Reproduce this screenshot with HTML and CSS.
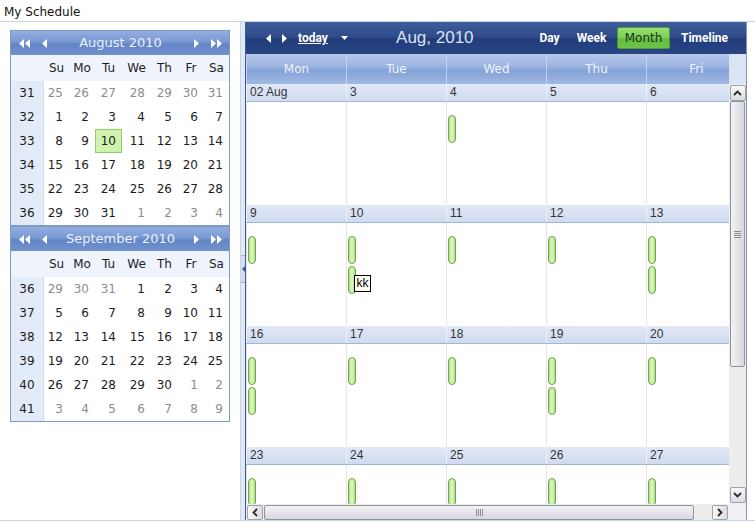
FILE: index.html
```html
<!DOCTYPE html>
<html>
<head>
<meta charset="utf-8">
<title>My Schedule</title>
<link rel="stylesheet" href="styles.css">
</head>
<body>
<div class="title">My Schedule</div>
<div class="frame">
  <div class="left">
    <div class="cal">
      <div class="cal-head">
        <span class="nav"><svg width="13" height="9" viewBox="0 0 13 9"><path d="M6 0v9L1 4.5zM12 0v9L7 4.5z" fill="#fff"/></svg></span>
        <span class="nav nav-s"><svg width="5" height="9" viewBox="0 0 5 9"><path d="M5 0v9L0 4.5z" fill="#fff"/></svg></span>
        <span class="cal-title">August 2010</span>
        <span class="nav nav-s"><svg width="5" height="9" viewBox="0 0 5 9"><path d="M0 0v9L5 4.5z" fill="#fff"/></svg></span>
        <span class="nav"><svg width="13" height="9" viewBox="0 0 13 9"><path d="M1 0v9L6 4.5zM7 0v9L12 4.5z" fill="#fff"/></svg></span>
      </div>
      <div class="cal-grid">
        <div class="wk hd"></div><div class="dn">Su</div><div class="dn">Mo</div><div class="dn">Tu</div><div class="dn">We</div><div class="dn">Th</div><div class="dn">Fr</div><div class="dn">Sa</div>
        <div class="wk">31</div><div class="d om">25</div><div class="d om">26</div><div class="d om">27</div><div class="d om">28</div><div class="d om">29</div><div class="d om">30</div><div class="d om">31</div>
        <div class="wk">32</div><div class="d">1</div><div class="d">2</div><div class="d">3</div><div class="d">4</div><div class="d">5</div><div class="d">6</div><div class="d">7</div>
        <div class="wk">33</div><div class="d">8</div><div class="d">9</div><div class="d sel">10</div><div class="d">11</div><div class="d">12</div><div class="d">13</div><div class="d">14</div>
        <div class="wk">34</div><div class="d">15</div><div class="d">16</div><div class="d">17</div><div class="d">18</div><div class="d">19</div><div class="d">20</div><div class="d">21</div>
        <div class="wk">35</div><div class="d">22</div><div class="d">23</div><div class="d">24</div><div class="d">25</div><div class="d">26</div><div class="d">27</div><div class="d">28</div>
        <div class="wk">36</div><div class="d">29</div><div class="d">30</div><div class="d">31</div><div class="d om">1</div><div class="d om">2</div><div class="d om">3</div><div class="d om">4</div>
      </div>
    </div>
    <div class="cal">
      <div class="cal-head">
        <span class="nav"><svg width="13" height="9" viewBox="0 0 13 9"><path d="M6 0v9L1 4.5zM12 0v9L7 4.5z" fill="#fff"/></svg></span>
        <span class="nav nav-s"><svg width="5" height="9" viewBox="0 0 5 9"><path d="M5 0v9L0 4.5z" fill="#fff"/></svg></span>
        <span class="cal-title">September 2010</span>
        <span class="nav nav-s"><svg width="5" height="9" viewBox="0 0 5 9"><path d="M0 0v9L5 4.5z" fill="#fff"/></svg></span>
        <span class="nav"><svg width="13" height="9" viewBox="0 0 13 9"><path d="M1 0v9L6 4.5zM7 0v9L12 4.5z" fill="#fff"/></svg></span>
      </div>
      <div class="cal-grid">
        <div class="wk hd"></div><div class="dn">Su</div><div class="dn">Mo</div><div class="dn">Tu</div><div class="dn">We</div><div class="dn">Th</div><div class="dn">Fr</div><div class="dn">Sa</div>
        <div class="wk">36</div><div class="d om">29</div><div class="d om">30</div><div class="d om">31</div><div class="d">1</div><div class="d">2</div><div class="d">3</div><div class="d">4</div>
        <div class="wk">37</div><div class="d">5</div><div class="d">6</div><div class="d">7</div><div class="d">8</div><div class="d">9</div><div class="d">10</div><div class="d">11</div>
        <div class="wk">38</div><div class="d">12</div><div class="d">13</div><div class="d">14</div><div class="d">15</div><div class="d">16</div><div class="d">17</div><div class="d">18</div>
        <div class="wk">39</div><div class="d">19</div><div class="d">20</div><div class="d">21</div><div class="d">22</div><div class="d">23</div><div class="d">24</div><div class="d">25</div>
        <div class="wk">40</div><div class="d">26</div><div class="d">27</div><div class="d">28</div><div class="d">29</div><div class="d">30</div><div class="d om">1</div><div class="d om">2</div>
        <div class="wk">41</div><div class="d om">3</div><div class="d om">4</div><div class="d om">5</div><div class="d om">6</div><div class="d om">7</div><div class="d om">8</div><div class="d om">9</div>
      </div>
    </div>
  </div>

  <div class="splitter">
    <div class="handle"><svg width="3" height="6" viewBox="0 0 3 6"><path d="M3 0v6L0 3z" fill="#3d5c9a"/></svg></div>
  </div>

  <div class="sched">
    <div class="toolbar">
      <span class="tb-arrow"><svg width="5" height="9" viewBox="0 0 5 9"><path d="M5 0v9L0 4.5z" fill="#fff"/></svg></span>
      <span class="tb-arrow tb-next"><svg width="5" height="9" viewBox="0 0 5 9"><path d="M0 0v9L5 4.5z" fill="#fff"/></svg></span>
      <span class="today">today</span>
      <span class="dd"><svg width="7" height="4" viewBox="0 0 7 4"><path d="M0 0h7L3.5 4z" fill="#fff"/></svg></span>
      <span class="period">Aug, 2010</span>
      <div class="views">
        <span class="view v-day">Day</span>
        <span class="view v-week">Week</span>
        <span class="view v-month">Month</span>
        <span class="view v-tl">Timeline</span>
      </div>
    </div>

    <div class="colhead">
      <div class="colhead-cells">
        <div>Mon</div><div>Tue</div><div>Wed</div><div>Thu</div><div>Fri</div>
      </div>
      <div class="colhead-fill"></div>
    </div>

    <div class="main">
      <div class="viewport">
        <div class="week">
          <div class="daterow"><div>02 Aug</div><div>3</div><div>4</div><div>5</div><div>6</div></div>
          <div class="wbody">
            <div class="d"></div>
            <div class="d"></div>
            <div class="d"><span class="apt"></span></div>
            <div class="d"></div>
            <div class="d"></div>
          </div>
        </div>
        <div class="week">
          <div class="daterow"><div>9</div><div>10</div><div>11</div><div>12</div><div>13</div></div>
          <div class="wbody">
            <div class="d"><span class="apt"></span></div>
            <div class="d"><span class="apt"></span><span class="apt"></span><span class="tip">kk</span></div>
            <div class="d"><span class="apt"></span></div>
            <div class="d"><span class="apt"></span></div>
            <div class="d"><span class="apt"></span><span class="apt"></span></div>
          </div>
        </div>
        <div class="week">
          <div class="daterow"><div>16</div><div>17</div><div>18</div><div>19</div><div>20</div></div>
          <div class="wbody">
            <div class="d"><span class="apt"></span><span class="apt"></span></div>
            <div class="d"><span class="apt"></span></div>
            <div class="d"><span class="apt"></span></div>
            <div class="d"><span class="apt"></span><span class="apt"></span></div>
            <div class="d"><span class="apt"></span></div>
          </div>
        </div>
        <div class="week">
          <div class="daterow"><div>23</div><div>24</div><div>25</div><div>26</div><div>27</div></div>
          <div class="wbody">
            <div class="d"><span class="apt"></span></div>
            <div class="d"><span class="apt"></span></div>
            <div class="d"><span class="apt"></span></div>
            <div class="d"><span class="apt"></span></div>
            <div class="d"><span class="apt"></span></div>
          </div>
        </div>
      </div>
      <div class="vscroll">
        <div class="sbtn"><svg width="9" height="6" viewBox="0 0 9 6"><path d="M1 5L4.5 1.5 8 5" fill="none" stroke="#2a2a2a" stroke-width="1.8"/></svg></div>
        <div class="vthumb"><svg width="7" height="7" viewBox="0 0 7 7"><path d="M0 .5h7M0 2.5h7M0 4.5h7M0 6.5h7" stroke="#8a8c92" stroke-width="1"/></svg></div>
        <div class="track"></div>
        <div class="sbtn"><svg width="9" height="6" viewBox="0 0 9 6"><path d="M1 1L4.5 4.5 8 1" fill="none" stroke="#2a2a2a" stroke-width="1.8"/></svg></div>
      </div>
    </div>

    <div class="hbar">
      <div class="hscroll">
        <div class="sbtn"><svg width="6" height="9" viewBox="0 0 6 9"><path d="M5 1L1.5 4.5 5 8" fill="none" stroke="#2a2a2a" stroke-width="1.8"/></svg></div>
        <div class="hthumb"><svg width="7" height="7" viewBox="0 0 7 7"><path d="M.5 0v7M2.5 0v7M4.5 0v7M6.5 0v7" stroke="#8a8c92" stroke-width="1"/></svg></div>
        <div class="track"></div>
        <div class="sbtn"><svg width="6" height="9" viewBox="0 0 6 9"><path d="M1 1L4.5 4.5 1 8" fill="none" stroke="#2a2a2a" stroke-width="1.8"/></svg></div>
      </div>
      <div class="corner"></div>
    </div>
  </div>
</div>
</body>
</html>
```

FILE: styles.css
```css
html, body {
  margin: 0;
  padding: 0;
  background: #fff;
}
body {
  width: 755px;
  font-family: "DejaVu Sans", sans-serif;
  font-size: 12px;
  color: #1c1c1c;
}
.title {
  height: 21px;
  box-sizing: border-box;
  padding: 4px 0 0 4px;
  line-height: 16px;
  font-size: 12px;
  color: #111;
}
.frame {
  display: flex;
  height: 498px;
  border-top: 1px solid #c8d4e7;
  border-bottom: 1px solid #c8d4e7;
}

/* ---------- left pane / calendars ---------- */
.left {
  width: 241px;
  box-sizing: border-box;
  border-right: 1px solid #c8d4e7;
  padding: 8px 0 0 10px;
}
.cal {
  width: 220px;
  box-sizing: border-box;
  border: 1px solid #7f9ac5;
}
.cal-head {
  height: 24px;
  display: flex;
  align-items: center;
  padding: 0 6px 0 7px;
  background: linear-gradient(#93aee0 0%, #7898d3 45%, #6385c5 55%, #7192ce 100%);
  color: #e9f0fb;
  font-size: 13px;
}
.nav {
  display: flex;
  align-items: center;
}
.nav-s {
  margin: 0 11px;
}
.cal-title {
  flex: 1;
  text-align: center;
  line-height: 24px;
}
.cal-grid {
  display: grid;
  grid-template-columns: 33px 25px 26px 27px 29px 27px 26px 25px;
  grid-template-rows: 26px repeat(6, 24px);
}
.dn {
  background: #eff4fc;
  text-align: center;
  line-height: 26px;
  color: #1c1c1c;
}
.wk {
  box-sizing: border-box;
  background: #e3ebf8;
  border-right: 1px solid #d2ddef;
  text-align: center;
  line-height: 24px;
}
.wk.hd {
  background: #eff4fc;
  border-right: none;
}
.d {
  box-sizing: border-box;
  text-align: right;
  padding-right: 6px;
  line-height: 24px;
}
.om {
  color: #8d8d8d;
}
.sel {
  background: #cff2ae;
  border: 1px solid #96cb6a;
  line-height: 22px;
  padding-right: 5px;
}

/* ---------- splitter ---------- */
.splitter {
  width: 4px;
  background: #e2e9f5;
  position: relative;
}
.handle {
  position: absolute;
  left: 0;
  top: 233px;
  width: 4px;
  height: 28px;
  box-sizing: border-box;
  background: #d3def0;
  border-top: 1px solid #9fb2d4;
  border-bottom: 1px solid #9fb2d4;
  display: flex;
  align-items: center;
  justify-content: center;
}

/* ---------- scheduler ---------- */
.sched {
  width: 502px;
  box-sizing: border-box;
  border-left: 1px solid #3f5b94;
  border-right: 1px solid #8494b0;
  display: flex;
  flex-direction: column;
}
.toolbar {
  height: 32px;
  flex: 0 0 32px;
  display: flex;
  align-items: center;
  padding-left: 20px;
  background: linear-gradient(#405d9b 0%, #2e4a89 48%, #213c79 52%, #294584 100%);
  color: #fff;
}
.tb-arrow {
  display: flex;
  align-items: center;
}
.tb-next {
  margin-left: 11px;
}
.today {
  margin-left: 11px;
  font-family: Roboto, "Liberation Sans", sans-serif;
  font-weight: bold;
  font-size: 12px;
  text-decoration: underline;
  color: #fff;
}
.dd {
  display: flex;
  align-items: center;
  margin-left: 13px;
}
.period {
  width: 150px;
  margin-left: 12px;
  text-align: center;
  font-family: "Liberation Sans", sans-serif;
  font-size: 17px;
  color: #d9e3f5;
}
.views {
  margin-left: auto;
  display: flex;
  align-items: center;
  padding-right: 9px;
}
.view {
  text-align: center;
  font-family: Roboto, "Liberation Sans", sans-serif;
  font-weight: bold;
  font-size: 12px;
  color: #fff;
}
.v-day { width: 37px; }
.v-week { width: 47px; }
.v-month {
  width: 53px;
  height: 22px;
  margin: 0 2px;
  box-sizing: border-box;
  line-height: 20px;
  border: 1px solid #4f9a33;
  border-radius: 2px;
  background: linear-gradient(#96e06f 0%, #7acd55 50%, #62ba3e 55%, #6fc549 100%);
  font-family: "DejaVu Sans", sans-serif;
  font-weight: normal;
  color: #1b331b;
}
.v-tl { width: 65px; }

.colhead {
  height: 30px;
  flex: 0 0 30px;
  display: flex;
}
.colhead-cells {
  width: 483px;
  display: flex;
  overflow: hidden;
  background: linear-gradient(#b5c8ea 0%, #9db5e1 40%, #86a2d7 55%, #a0b8e3 100%);
}
.colhead-cells div {
  flex: 0 0 100px;
  box-sizing: border-box;
  border-left: 1px solid #c3d2ec;
  text-align: center;
  line-height: 30px;
  color: #eef3fb;
}
.colhead-fill {
  flex: 1;
  background: #dbe4f2;
}

.main {
  height: 420px;
  flex: 0 0 420px;
  display: flex;
}
.viewport {
  width: 483px;
  overflow: hidden;
  background: #fff;
}
.daterow {
  display: flex;
  height: 17px;
  border-bottom: 1px solid #a2b5d8;
  background: linear-gradient(#e1e8f6, #cfdbf0);
}
.daterow div {
  flex: 0 0 100px;
  box-sizing: border-box;
  border-left: 1px solid #edf1f9;
  padding-left: 3px;
  line-height: 17px;
  font-family: "Liberation Sans", sans-serif;
  font-size: 12px;
  color: #333;
}
.wbody {
  display: flex;
  height: 103px;
}
.wbody .d {
  flex: 0 0 100px;
  box-sizing: border-box;
  border-left: 1px solid #e6e6e6;
  position: relative;
  padding: 13px 0 0 1px;
  display: flex;
  flex-direction: column;
  gap: 2px;
}
.apt {
  display: block;
  width: 8px;
  height: 28px;
  flex: 0 0 28px;
  box-sizing: border-box;
  border: 1px solid #6fa645;
  border-radius: 4px;
  background: linear-gradient(90deg, #b4e189 0%, #e0f6c9 50%, #aedb80 100%);
}
.tip {
  position: absolute;
  left: 7px;
  top: 52px;
  width: 17px;
  height: 17px;
  box-sizing: border-box;
  border: 1px solid #000;
  background: #fffff4;
  font-family: "Liberation Sans", sans-serif;
  font-size: 12px;
  line-height: 15px;
  text-align: center;
  color: #000;
}

.vscroll {
  width: 17px;
  box-sizing: border-box;
  padding: 1px 0;
  background: #ededed;
  display: flex;
  flex-direction: column;
  align-items: center;
}
.sbtn {
  width: 16px;
  height: 16px;
  flex: 0 0 16px;
  box-sizing: border-box;
  border: 1px solid #9ca3ad;
  border-radius: 2px;
  background: linear-gradient(#f8f8f8, #dcdde2);
  display: flex;
  align-items: center;
  justify-content: center;
}
.vthumb {
  width: 15px;
  height: 266px;
  flex: 0 0 266px;
  box-sizing: border-box;
  border: 1px solid #8f939c;
  border-radius: 2px;
  background: linear-gradient(90deg, #f4f4f7, #d6d7df);
  display: flex;
  align-items: center;
  justify-content: center;
}
.track {
  flex: 1;
}
.hbar {
  height: 16px;
  flex: 0 0 16px;
  display: flex;
}
.hscroll {
  width: 483px;
  box-sizing: border-box;
  padding: 1px 1px 0 1px;
  background: #ededed;
  display: flex;
}
.hscroll .sbtn {
  height: 15px;
  flex: 0 0 16px;
  background: linear-gradient(90deg, #f8f8f8, #dcdde2);
}
.hthumb {
  width: 430px;
  flex: 0 0 430px;
  margin-left: 1px;
  box-sizing: border-box;
  border: 1px solid #8f939c;
  border-radius: 2px;
  background: linear-gradient(#f4f4f7, #d6d7df);
  display: flex;
  align-items: center;
  justify-content: center;
}
.corner {
  flex: 1;
  background: #f0f1f4;
}
```
